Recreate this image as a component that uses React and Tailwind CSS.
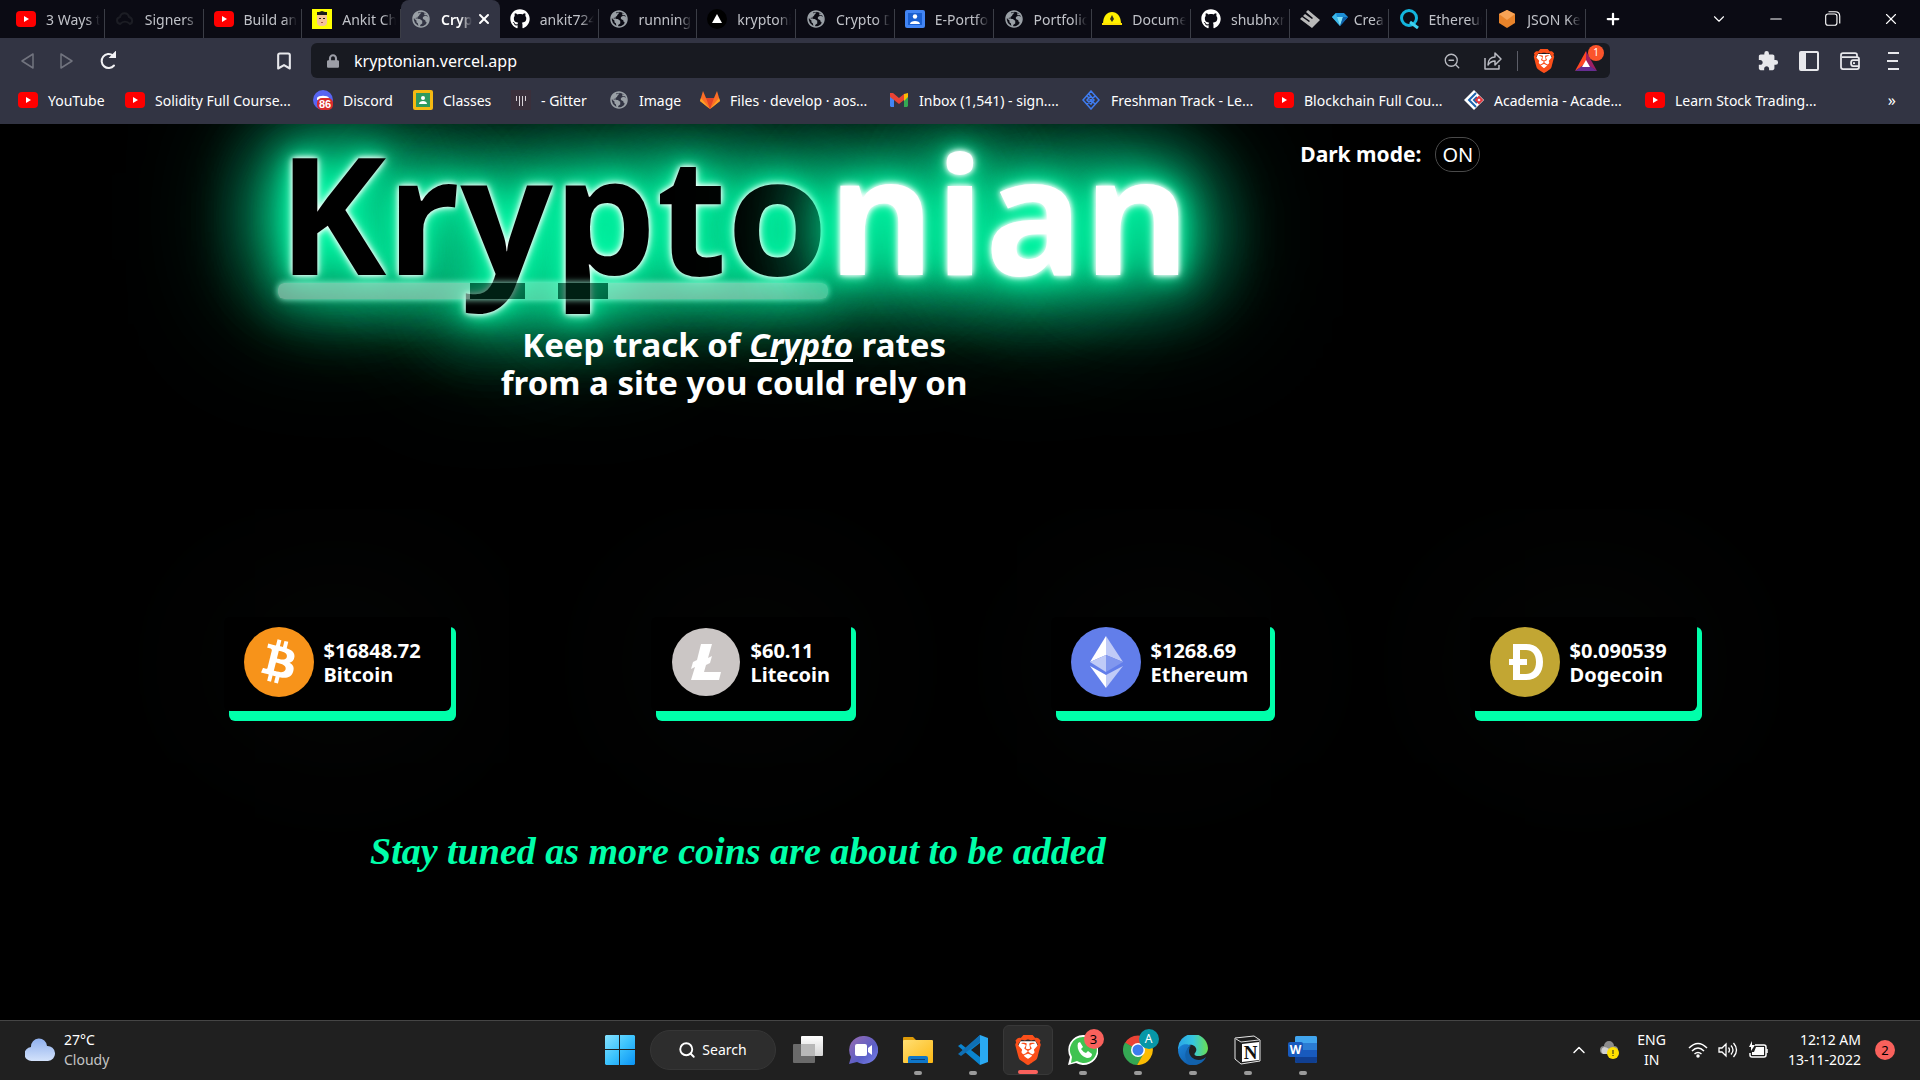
import React from "react";
import { SiBrave } from "react-icons/si";
import { FaGithub, FaLock } from "react-icons/fa";
import { MdExtension } from "react-icons/md";
import { IoEarthSharp } from "react-icons/io5";
import { Search, ZoomOut, Bookmark, Plus, X, ChevronDown, ChevronUp, Minus } from "lucide-react";

const YouTube = () => (
  <svg viewBox="0 0 20 20" className="size-5 shrink-0">
    <rect y="2" width="20" height="16" rx="4" fill="#f00" />
    <path d="M8 7l5 3-5 3z" fill="#fff" />
  </svg>
);
const Globe = () => <IoEarthSharp className="size-5 shrink-0 text-[#9aa0a6]" />;
const GitHub = () => <FaGithub className="size-5 shrink-0 text-white" />;

const Signers = () => (
  <svg viewBox="0 0 20 20" className="size-5 shrink-0" fill="none" stroke="#1c1d24" strokeWidth="2">
    <path d="M5 15c-4-1-4-6 0-7 1-5 8-5 9 0 4 1 4 6 1 7-3-3-7-3-10 0z" />
  </svg>
);
const Avatar = () => (
  <svg viewBox="0 0 20 20" className="size-5 shrink-0">
    <path d="M0 0h20v20H0z" fill="#ff0" />
    <rect x="5" y="4" width="10" height="13" rx="4" fill="#f5c49a" />
    <path d="M5 6V3h2l3-1 3 1h2v3z" fill="#1a1a1a" />
    <path d="M7 9h2v1H7zm4 0h2v1h-2z" fill="#222" />
    <path d="M9 13h2v1H9z" fill="#a65a3c" />
  </svg>
);
const Vercel = () => (
  <svg viewBox="0 0 20 20" className="size-5 shrink-0">
    <circle cx="10" cy="10" r="10" fill="#000" />
    <path d="M10 5l5 9H5z" fill="#fff" />
  </svg>
);
const Contact = () => (
  <svg viewBox="0 0 20 20" className="size-5 shrink-0">
    <rect y="1" width="20" height="18" rx="2" fill="#4285f4" />
    <path d="M3 4h14v12H3z" fill="#1a5fd0" />
    <circle cx="10" cy="7.500" r="2.200" fill="#fff" />
    <path d="M5 15c0-4 10-4 10 0z" fill="#fff" />
  </svg>
);
const Hardhat = () => (
  <svg viewBox="0 0 20 20" className="size-5 shrink-0">
    <path d="M1 15C1 7 5 3 10 3s9 4 9 12z" fill="#fff100" />
    <path d="M0 14h20v2H0z" fill="#ffe000" />
    <path d="M10 6l2 4-2 3-2-3z" fill="#35331c" />
  </svg>
);
const Sketch = () => (
  <svg viewBox="0 0 20 20" className="size-5 shrink-0" fill="#b9b9b9">
    <path d="M8 1l12 10-8 8L0 10l2-2 7 5 1-1-7-5 2-2 7 5 1-1-7-6z" />
  </svg>
);
const Gem = () => (
  <svg viewBox="0 0 16 16" className="size-4 shrink-0">
    <path d="M4 2h8l4 4-8 9-8-9z" fill="#1c8fd6" />
    <path d="M4 2l1 4 3 9-8-9z" fill="#3bb8e8" />
    <path d="M5 6h6l-3 9z" fill="#7fe0f5" />
    <path d="M11 6h5l-8 9z" fill="#0e5fa8" />
  </svg>
);
const QuickNode = () => (
  <svg viewBox="0 0 20 20" className="size-5 shrink-0" fill="none" strokeWidth="3">
    <circle cx="10" cy="9" r="7.500" stroke="#13b5dd" />
    <path d="M11 13l8 6" stroke="#3fd0ee" />
  </svg>
);
const Hex = () => (
  <svg viewBox="0 0 20 20" className="size-5 shrink-0">
    <path d="M10 1l8 4v9l-8 5-8-5V5z" fill="#e8832a" />
    <path d="M10 1l8 4-8 6-8-6z" fill="#f7a356" />
  </svg>
);
const Discord = () => (
  <svg viewBox="0 0 20 20" className="size-5 shrink-0">
    <circle cx="10" cy="10" r="10" fill="#5865f2" />
    <path d="M4 8c1-3 11-3 12 0v2H4z" fill="#fff" />
    <rect x="4" y="8" width="16" height="12" rx="5" fill="#d92b2b" />
    <text x="12" y="18" textAnchor="middle" fontSize="11" fontWeight="700" fontFamily="Liberation Sans, sans-serif" fill="#fff">86</text>
  </svg>
);
const Classroom = () => (
  <svg viewBox="0 0 20 20" className="size-5 shrink-0">
    <rect width="20" height="20" rx="2" fill="#f4b912" />
    <path d="M3 3h14v14H3z" fill="#2f9a5e" />
    <circle cx="10" cy="8" r="2" fill="#fff" />
    <path d="M6 14c0-4 8-4 8 0z" fill="#fff" />
  </svg>
);
const Gitter = () => (
  <svg viewBox="0 0 20 20" className="size-5 shrink-0">
    <path d="M0 0h20v20H0z" fill="#3a2f3b" />
    <path d="M5 6h1v5H5zm3 0h1v10H8zm3 0h1v10h-1zm3 0h1v5h-1z" fill="#d8d2d8" />
  </svg>
);
const GitLab = () => (
  <svg viewBox="0 0 20 20" className="size-5 shrink-0">
    <path d="M0 11l3-10 3 7h8l3-7 3 10-10 8z" fill="#fc6d26" />
    <path d="M10 19L6 8h8z" fill="#e24329" />
    <path d="M10 19L0 11l1-3z" fill="#fca326" />
    <path d="M10 19l10-8-1-3z" fill="#fca326" />
  </svg>
);
const Gmail = () => (
  <svg viewBox="0 0 20 20" className="size-5 shrink-0">
    <path d="M1 5l4 3v9H2l-1-1z" fill="#4285f4" />
    <path d="M19 5l-4 3v9h3l1-1z" fill="#34a853" />
    <path d="M15 4l4-1v4l-4 4z" fill="#fbbc04" />
    <path d="M1 3h3l6 5 5-4v6l-5 4-5-4-4-3z" fill="#ea4335" />
  </svg>
);
const Freshman = () => (
  <svg viewBox="0 0 20 20" className="size-5 shrink-0" fill="none" stroke="#3f7cf0" strokeWidth="1.500">
    <path d="M10 1l8 9-8 9-8-9zM6 6l8 8M14 6l-8 8M8 4l5 6-3 4-4-4 4-4" />
  </svg>
);
const Academia = () => (
  <svg viewBox="0 0 20 20" className="size-5 shrink-0">
    <path d="M10 0l10 10-10 10L0 10z" fill="#fff" />
    <path d="M12 3l-7 7 7 7M13 7l-3 3 3 3" fill="none" stroke="#1d63ad" strokeWidth="2" />
    <path d="M15 7l3 3-3 3-3-3z" fill="none" stroke="#e0343c" strokeWidth="2" />
  </svg>
);
const Brave = ({ className }) => (
  <svg viewBox="0 0 24 24" className={className}>
    <path d="M6 5h12l2 4-3 8-5 5-5-5-3-8z" fill="#fff" />
    <SiBrave x="0" y="0" size={24} color="#fb4f1a" />
  </svg>
);

const tabs = [
  [YouTube, "3 Ways to"], [Signers, "Signers"], [YouTube, "Build an N"], [Avatar, "Ankit Cha"],
  [Globe, "Crypto", true], [GitHub, "ankit7245"], [Globe, "running"], [Vercel, "kryptonian"],
  [Globe, "Crypto Da"], [Contact, "E-Portfolio"], [Globe, "Portfolio"], [Hardhat, "Document"],
  [GitHub, "shubhxmi"], [Sketch, "Create", false, Gem], [QuickNode, "Ethereum"], [Hex, "JSON Key"],
];

const bookmarks = [
  [YouTube, "YouTube", "w-[57px]"], [YouTube, "Solidity Full Course...", "w-[138px]"],
  [Discord, "Discord", "w-[50px]"], [Classroom, "Classes", "w-[48px]"],
  [Gitter, "- Gitter", "w-[48px]"], [Globe, "Image", "w-[41px]"],
  [GitLab, "Files · develop · aos...", "w-[139px]"], [Gmail, "Inbox (1,541) - sign....", "w-[142px]"],
  [Freshman, "Freshman Track - Le...", "w-[143px]"], [YouTube, "Blockchain Full Cou...", "w-[140px]"],
  [Academia, "Academia - Acade...", "w-[131px]"], [YouTube, "Learn Stock Trading...", "w-[142px]"],
];

function TabStrip() {
  return (
    <div className="flex h-[38px] items-end bg-[#0b0b14] pl-1.5">
      <div role="tablist" className="grid h-full min-w-0 flex-1 auto-cols-[minmax(0,1fr)] grid-flow-col">
        {tabs.map(([Icon, label, active, Extra], i) => (
          <button
            key={i}
            role="tab"
            aria-selected={!!active}
            className={
              active
                ? "flex items-center rounded-t-lg bg-[#323443] pl-2.5 pr-2 text-white"
                : "flex items-center pl-2.5 text-[#c0c2c8]"
            }
          >
            <Icon />
            {Extra && <span className="-mr-1 ml-3"><Extra /></span>}
            <span
              className={
                active
                  ? "ml-2.5 min-w-0 flex-1 overflow-hidden whitespace-nowrap text-left font-semibold [mask-image:linear-gradient(to_right,#000_60%,transparent)]"
                  : "ml-2.5 min-w-0 flex-1 overflow-hidden whitespace-nowrap text-left [mask-image:linear-gradient(to_right,#000_75%,transparent)]"
              }
            >
              {label}
            </span>
            {active ? <X className="ml-1 size-4 shrink-0" strokeWidth={3} /> : <span className="ml-1 h-[29px] w-px self-end bg-[#3b3d46]" />}
          </button>
        ))}
      </div>
      <div className="flex h-full w-[334px] items-center text-white">
        <button aria-label="New tab" className="ml-[18px]"><Plus className="size-[18px]" strokeWidth={3} /></button>
        <button aria-label="Search tabs" className="ml-[88px]"><ChevronDown className="size-[18px]" strokeWidth={1.5} /></button>
        <button aria-label="Minimise" className="ml-[39px]"><Minus className="size-[18px]" strokeWidth={1.5} /></button>
        <button aria-label="Restore" className="ml-[39px]">
          <svg viewBox="0 0 16 16" className="size-[18px]" fill="none" stroke="#fff">
            <rect x="1.500" y="3.500" width="10" height="10" rx="2" />
            <path d="M4 1.500h6q4 0 4 4V12" />
          </svg>
        </button>
        <button aria-label="Close" className="ml-10"><X className="size-[18px]" strokeWidth={1.5} /></button>
      </div>
    </div>
  );
}

function Toolbar() {
  return (
    <div className="flex items-center pt-[5px] text-[#e8e8ec]">
      <button aria-label="Back" className="ml-[19px]">
        <svg viewBox="0 0 16 18" className="h-[18px] w-4" fill="none" stroke="#72747f" strokeWidth="1.500"><path d="M14 2v14L3 9z" strokeLinejoin="round" /></svg>
      </button>
      <button aria-label="Forward" className="ml-6">
        <svg viewBox="0 0 16 18" className="h-[18px] w-4" fill="none" stroke="#72747f" strokeWidth="1.500"><path d="M2 2v14l11-7z" strokeLinejoin="round" /></svg>
      </button>
      <button aria-label="Reload" className="ml-6">
        <svg viewBox="0 0 20 20" className="size-5" fill="none" stroke="#f2f2f5" strokeWidth="2">
          <path d="M15 14.500A7 7 0 1 1 14 4.500" strokeLinecap="round" />
          <path d="M12 6h4V2z" fill="#f2f2f5" />
        </svg>
      </button>
      <button aria-label="Bookmark" className="ml-[155px]"><Bookmark className="size-5" strokeWidth={2.5} /></button>
      <div className="ml-[17px] flex h-[35px] min-w-0 flex-1 items-center rounded-md bg-[#181a21] pl-4 pr-2">
        <FaLock className="h-4 w-3 shrink-0 text-[#9c9ea7]" />
        <input aria-label="Address" defaultValue="kryptonian.vercel.app" className="ml-[15px] min-w-0 flex-1 bg-transparent text-[16px] text-white outline-none" />
        <button aria-label="Zoom"><ZoomOut className="size-[18px] text-[#b9bbc2]" strokeWidth={1.75} /></button>
        <button aria-label="Share" className="ml-[22px]">
          <svg viewBox="0 0 20 20" className="size-5" fill="none" stroke="#b9bbc2" strokeWidth="1.500">
            <path d="M2 7v11h14v-4M5 14c0-5 3-8 7-8V2l6 6-6 6v-4c-3 0-5 1-7 4z" strokeLinejoin="round" />
          </svg>
        </button>
        <span className="mx-3.5 h-5 w-px bg-[#5c5e68]" />
        <button aria-label="Brave Shields"><Brave className="size-6" /></button>
        <button aria-label="Rewards" className="relative ml-[18px] pr-1">
          <svg viewBox="0 0 24 24" className="size-6">
            <path d="M12 2L1 22l11-7z" fill="#ff4724" />
            <path d="M12 2l11 20-11-7z" fill="#9e1f63" />
            <path d="M1 22h22l-11-8z" fill="#662d91" />
            <path d="M12 11l4 7H8z" fill="#fff" />
          </svg>
          <span className="absolute -right-0.5 -top-1 flex size-4 items-center justify-center rounded-full bg-[#fb542b] text-[10px] text-white">1</span>
        </button>
      </div>
      <div className="flex w-[310px] items-center justify-end gap-5 pr-5">
        <button aria-label="Extensions"><MdExtension className="size-[22px]" /></button>
        <button aria-label="Sidebar">
          <svg viewBox="0 0 20 20" className="size-5"><rect x="1" y="1" width="18" height="18" rx="1" fill="none" stroke="#e8e8ec" strokeWidth="2" /><path d="M1 1h6v18H1z" fill="#e8e8ec" /></svg>
        </button>
        <button aria-label="Wallet" className="ml-px">
          <svg viewBox="0 0 20 20" className="size-5" fill="none" stroke="#e8e8ec" strokeWidth="1.750">
            <path d="M17 6V4q0-2-2-2H3Q1 2 1 4v12q0 2 2 2h14q2 0 2-2V8q0-2-2-2H2" />
            <path d="M19 9h-6q-2 0-2 3t2 3h6M13 12h2" />
          </svg>
        </button>
        <button aria-label="Menu" className="ml-1.5">
          <svg viewBox="0 0 14 20" className="h-5 w-3.5" fill="none" stroke="#e8e8ec" strokeWidth="2"><path d="M2 2h11M1 10h11M2 18h11" /></svg>
        </button>
      </div>
    </div>
  );
}

function Bookmarks() {
  return (
    <div className="flex h-[46px] items-center gap-5 pb-0.5 pl-[18px] pr-6 text-white">
      {bookmarks.map(([Icon, label, width], i) => (
        <a key={i} href="#" className="flex shrink-0 items-center gap-2.5">
          <Icon />
          <span className={`whitespace-nowrap ${width}`}>{label}</span>
        </a>
      ))}
      <button aria-label="More bookmarks" className="ml-auto text-base">»</button>
    </div>
  );
}

const Bitcoin = () => (
  <svg viewBox="0 0 64 64" className="size-[70px] shrink-0">
    <circle cx="32" cy="32" r="32" fill="#f7931a" />
    <path fill="#fff" d="M46.100 27.440c.640-4.260-2.600-6.550-7.040-8.080l1.440-5.770-3.510-.880-1.400 5.620c-.920-.230-1.870-.450-2.810-.660l1.410-5.660-3.510-.870-1.440 5.770c-.760-.170-1.510-.350-2.240-.530v-.020l-4.840-1.210-.930 3.750s2.600.600 2.550.630c1.420.360 1.680 1.300 1.640 2.050l-1.640 6.580c.1.020.230.060.370.120l-.380-.090-2.300 9.210c-.170.430-.620 1.080-1.610.830.040.050-2.550-.640-2.550-.640l-1.740 4.020 4.570 1.140c.850.210 1.680.440 2.500.650l-1.450 5.840 3.500.870 1.440-5.770c.960.260 1.890.5 2.800.730l-1.430 5.750 3.510.870 1.450-5.820c5.990 1.130 10.490.680 12.380-4.740 1.530-4.360-.080-6.880-3.220-8.510 2.290-.530 4.020-2.040 4.480-5.150zM38.080 38.690c-1.090 4.360-8.430 2-10.810 1.410l1.930-7.740c2.380.6 10.010 1.770 8.880 6.330zm1.090-11.310c-.990 3.970-7.100 1.950-9.080 1.460l1.750-7.020c1.980.490 8.360 1.410 7.330 5.560z" />
  </svg>
);
const Litecoin = () => (
  <svg viewBox="0 0 70 70" className="size-[70px] shrink-0">
    <circle cx="35" cy="35" r="34" fill="#cbc6c5" />
    <path d="M30 17h11l-4 14 4-2-2 7-4 2-2 7h17l-2 8H20l4-13-4 2 2-7 4-2z" fill="#fff" />
  </svg>
);
const Ethereum = () => (
  <svg viewBox="0 0 70 70" className="size-[70px] shrink-0">
    <circle cx="35" cy="35" r="35" fill="#627eea" />
    <path d="M35 9v19L19 35z" fill="#fff" />
    <path d="M35 9v19l17 7z" fill="#c0cbf7" />
    <path d="M19 35l16-7v17z" fill="#c0cbf7" />
    <path d="M52 35l-17-7v17z" fill="#8197ee" />
    <path d="M19 39l16 9v13z" fill="#fff" />
    <path d="M52 39l-17 9v13z" fill="#c0cbf7" />
  </svg>
);
const Dogecoin = () => (
  <svg viewBox="0 0 70 70" className="size-[70px] shrink-0">
    <circle cx="35" cy="35" r="35" fill="#c2a633" />
    <path fillRule="evenodd" d="M23 17h13c11 0 17 7 17 18s-6 18-17 18H23V38h-4v-6h4zm7 6v9h7v6h-7v9h6c6 0 10-4 10-12s-4-12-10-12z" fill="#fff" />
  </svg>
);

const coins = [
  [Bitcoin, "$16848.72", "Bitcoin", "w-[107px]"],
  [Litecoin, "$60.11", "Litecoin", "w-20"],
  [Ethereum, "$1268.69", "Ethereum", "w-[99px]"],
  [Dogecoin, "$0.090539", "Dogecoin", "w-[107px]"],
];

const neon =
  "[text-shadow:0_0_5px_#fff,0_0_10px_#fff,0_0_21px_#0fa,0_0_42px_#0fa,0_0_82px_#0fa,0_0_92px_#0fa,0_0_102px_#0fa,0_0_151px_#0fa]";

function Page() {
  return (
    <main className="flex-1 overflow-hidden bg-black font-['Noto_Sans','Open_Sans',sans-serif] text-white">
      <div className="flex items-start pl-[278px]">
        <div className="text-center">
          <h1 className={`isolate flex font-['Open_Sans','Noto_Sans',sans-serif] text-[163px] font-bold leading-[176px] ${neon}`}>
            <span className="relative text-black">
              <span className="absolute inset-x-0 top-[159px] -z-10 h-4 rounded-md shadow-[0_0_42px_#00ffaa80,0_0_82px_#00ffaa80]" />
              Krypto
              <span className="absolute inset-x-0 top-[159px] flex h-4 overflow-hidden rounded-md shadow-[0_0_7px_#9fffdf]">
                <span className="w-[35%] bg-[#b4f0d8]/60" />
                <span className="w-[10%] bg-[#003522]/60" />
                <span className="w-[6%] bg-[#96ffd8]/50" />
                <span className="w-[9%] bg-[#003522]/60" />
                <span className="flex-1 bg-[#b4f0d8]/60" />
              </span>
            </span>
            <span className="relative">nian</span>
          </h1>
          <p className="relative mt-[26px] text-[33px] font-bold leading-[38px]">
            Keep track of <em className="underline">Crypto</em> rates
            <br />
            from a site you could rely on
          </p>
        </div>
        <div className="relative ml-[110px] mt-[13px] flex items-center gap-3.5 text-xl">
          <span id="mode" className="text-[21px] font-bold">Dark mode:</span>
          <button aria-labelledby="mode" className="h-[35px] rounded-[17px] border border-[#4a4a4a] bg-black px-1.5">ON</button>
        </div>
      </div>

      <ul className="mt-[215px] flex justify-center gap-[200px]">
        {coins.map(([Icon, price, name, width]) => (
          <li key={name} className="flex items-start gap-2.5 rounded-md bg-black px-5 pb-3.5 pt-2.5 shadow-[5px_10px_#0fa,0_0_200px_rgba(120,160,145,0.09)]">
            <Icon />
            <div className={`mt-3 whitespace-nowrap text-xl font-bold leading-6 ${width}`}>
              <p>{price}</p>
              <p>{name}</p>
            </div>
          </li>
        ))}
      </ul>

      <p className="ml-[370px] mt-[110px] font-['Brush_Script_MT','Liberation_Serif',serif] text-[38px] font-bold italic leading-[60px] text-[#0fa]">
        Stay tuned as more coins are about to be added
      </p>
    </main>
  );
}

const Windows = () => (
  <svg viewBox="0 0 30 30" className="size-[30px]">
    <defs><linearGradient id="win" x1="0" y1="0" x2="1" y2="1"><stop stopColor="#86e2ff" /><stop offset=".5" stopColor="#3cc3fd" /><stop offset="1" stopColor="#0a93f5" /></linearGradient></defs>
    <path d="M1 0h13v14H0V1zM15 0h14l1 1v13H15zM0 15h14v15H1l-1-1zM15 15h15v14l-1 1H15z" fill="url(#win)" />
  </svg>
);
const TaskView = () => (
  <svg viewBox="0 0 30 30" className="size-[30px]">
    <defs><linearGradient id="tv" x1="0" y1="0" x2="0" y2="1"><stop stopColor="#fff" /><stop offset="1" stopColor="#d4d4d4" /></linearGradient></defs>
    <rect x="8" y="1" width="22" height="20" rx="1" fill="url(#tv)" />
    <rect y="9" width="22" height="19" rx="1" fill="#6a6a6a" />
    <path d="M8 9h14v12H8z" fill="#b8b8b8" />
  </svg>
);
const Chat = () => (
  <svg viewBox="0 0 30 30" className="size-[30px]">
    <defs><linearGradient id="chat" x1="0" y1="0" x2="1" y2="1"><stop stopColor="#9a6bb0" /><stop offset=".6" stopColor="#5b5fc7" /><stop offset="1" stopColor="#7b83eb" /></linearGradient></defs>
    <path d="M15 1a14 14 0 1 1-6 26l-8 2 2-7A14 14 0 0 1 15 1z" fill="url(#chat)" />
    <rect x="7" y="9" width="12" height="12" rx="2" fill="#fff" />
    <path d="M20 13l4-3v10l-4-3z" fill="#fff" />
  </svg>
);
const Explorer = () => (
  <svg viewBox="0 0 30 30" className="size-[30px]">
    <defs><linearGradient id="fold" x1="0" y1="0" x2="1" y2="1"><stop stopColor="#ffdf73" /><stop offset="1" stopColor="#fdb813" /></linearGradient></defs>
    <path d="M0 3q0-1 1-1h9l3 3h16v8H0z" fill="#dd9a08" />
    <rect y="5" width="30" height="23" rx="1" fill="url(#fold)" />
    <path d="M5 28v-5q0-2 2-2h16q2 0 2 2v5z" fill="#0f76c8" />
    <path d="M8 24h14v1H8z" fill="#0a3f75" />
  </svg>
);
const VSCode = () => (
  <svg viewBox="0 0 30 30" className="size-[30px]">
    <path d="M22 0L8 13 3 9 0 11l22 19v-8L13 15l9-7z" fill="#0a84cf" />
    <path d="M0 19l3 2L22 7V0z" fill="#0f6fb4" />
    <path d="M22 0l8 3v24l-8 3z" fill="#2aaaf3" />
  </svg>
);
const WhatsApp = () => (
  <span className="relative flex size-[30px] items-center justify-center">
    <svg viewBox="0 0 30 30" className="size-[30px]">
      <path d="M15 0a15 15 0 1 1-7 28l-8 2 2-8A15 15 0 0 1 15 0z" fill="#fff" />
      <path d="M15 2a13 13 0 1 1-6 24l-6 2 1-6A13 13 0 0 1 15 2z" fill="#3fc351" />
      <path d="M10 8l2-1 3 5-2 2q2 3 5 4l2-2 4 3q0 4-5 4C14 22 8 15 10 8z" fill="#fff" />
    </svg>
    <span className="absolute -right-1.5 -top-1.5 flex size-5 items-center justify-center rounded-full bg-[#f9615c] text-[13px] text-black">3</span>
  </span>
);
const Chrome = () => (
  <span className="relative flex size-[30px]">
    <svg viewBox="0 0 30 30" className="size-[30px]">
      <path d="M15 15L2 8a15 15 0 0 1 26 0z" fill="#ea4335" />
      <path d="M2 7.500A15 15 0 0 0 14 30l7-11-6-4z" fill="#34a853" />
      <path d="M28 8a15 15 0 0 1-14 22l7-12V8z" fill="#fbbc04" />
      <circle cx="15" cy="15" r="7" fill="#fff" />
      <circle cx="15" cy="15" r="5.500" fill="#3b7ded" />
    </svg>
    <span className="absolute -right-1.5 -top-1.5 flex size-5 items-center justify-center rounded-full bg-[#0797a7] text-[12px] text-white">A</span>
  </span>
);
const Edge = () => (
  <svg viewBox="0 0 30 30" className="size-[30px]">
    <defs>
      <linearGradient id="edge1" x1="0" y1="0" x2="1" y2="0"><stop stopColor="#2aa5e8" /><stop offset=".5" stopColor="#35c6df" /><stop offset="1" stopColor="#6be04f" /></linearGradient>
      <linearGradient id="edge2" x1="0" y1="0" x2="1" y2="1"><stop stopColor="#1b84d8" /><stop offset="1" stopColor="#0b4f9c" /></linearGradient>
    </defs>
    <path d="M0 15A15 15 0 0 1 30 13c0 6-5 8-9 8-5 0-5-2-4-3 4-5-2-9-6-8C6 10 2 12 0 15z" fill="url(#edge1)" />
    <path d="M0 15c2-6 9-7 13-4-4 1-5 6-3 10 3 7 11 7 17 2-5 8-16 10-22 3a15 15 0 0 1-5-11z" fill="url(#edge2)" />
    <path d="M12 12c-3 6 1 13 9 13 3 0 5-1 7-3-3 7-11 10-17 6C5 23 7 14 12 12z" fill="#1262ac" />
  </svg>
);
const Notion = () => (
  <svg viewBox="0 0 30 30" className="size-[30px]">
    <path d="M2 3l19-2 6 4v21l-19 3-6-5z" fill="#1b1b1b" stroke="#e6e6e6" />
    <path d="M9 9l17-2v18L9 27z" fill="#fff" />
    <path d="M8 7L3 4M8 7l18-2" stroke="#ddd" />
    <text x="17.500" y="24" textAnchor="middle" fontSize="19" fontWeight="700" fontFamily="Liberation Serif, serif" fill="#111">N</text>
  </svg>
);
const Word = () => (
  <svg viewBox="0 0 30 30" className="size-[30px]">
    <rect x="7" y="1" width="22" height="27" rx="2" fill="#2b7cd3" />
    <path d="M7 3q0-2 2-2h18q2 0 2 2v5H7z" fill="#41a5ee" />
    <path d="M7 15h22v7H7z" fill="#185abd" />
    <path d="M7 22h22v4q0 2-2 2H9q-2 0-2-2z" fill="#103f91" />
    <rect y="7" width="15" height="15" rx="2" fill="#185abd" />
    <text x="7.500" y="19" textAnchor="middle" fontSize="12" fontWeight="700" fontFamily="Open Sans, sans-serif" fill="#fff">W</text>
  </svg>
);

const apps = [
  ["Task view", TaskView, ""], ["Chat", Chat, ""], ["File Explorer", Explorer, "open"], ["VS Code", VSCode, "open"],
  ["Brave", () => <Brave className="size-[30px]" />, "active"], ["WhatsApp", WhatsApp, "open"], ["Chrome", Chrome, "open"],
  ["Edge", Edge, "open"], ["Notion", Notion, "open"], ["Word", Word, "open"],
];

function Taskbar() {
  return (
    <footer className="grid h-[60px] grid-cols-[1fr_auto_1fr] items-center border-t border-[#454545] bg-[#202020] pb-0.5 text-[14px] leading-5 text-white">
      <div className="flex items-center gap-[9px] pl-[25px]">
        <svg viewBox="0 0 30 24" className="h-6 w-[30px]">
          <defs><linearGradient id="cloud" x1="0" y1="0" x2="0" y2="1"><stop stopColor="#8fb0ee" /><stop offset="1" stopColor="#d3e2fb" /></linearGradient></defs>
          <path d="M7 23a7 7 0 0 1-1-14 8 8 0 0 1 16-1 7.500 7.500 0 0 1 1 15z" fill="url(#cloud)" />
        </svg>
        <div>
          <p>27°C</p>
          <p className="text-[#c4c4c4]">Cloudy</p>
        </div>
      </div>
      <div className="flex items-center gap-[5px] pl-0.5">
        <button aria-label="Start" className="flex size-[50px] items-center justify-center"><Windows /></button>
        <button className="mr-0.5 flex h-10 w-[126px] items-center justify-center gap-1.5 rounded-full border border-[#363636] bg-[#2d2d2d]">
          <Search className="size-[18px]" strokeWidth={2.5} />
          Search
        </button>
        {apps.map(([name, Icon, state]) => (
          <button
            key={name}
            aria-label={name}
            className={
              state === "active"
                ? "relative flex size-[50px] items-center justify-center rounded-md border border-[#383838] bg-[#2d2d2d]"
                : "relative flex size-[50px] items-center justify-center"
            }
          >
            <Icon />
            {state === "open" && <span className="absolute bottom-0 h-1 w-2 rounded-full bg-[#9a9a9a]" />}
            {state === "active" && <span className="absolute bottom-0 h-1 w-5 rounded-full bg-[#f9615c]" />}
          </button>
        ))}
      </div>
      <div className="flex items-center justify-end pr-[25px]">
        <ChevronUp className="size-5" strokeWidth={1.75} />
        <svg viewBox="0 0 20 18" className="ml-2.5 h-[18px] w-5">
          <path d="M5 13a4 4 0 0 1 0-8 5 5 0 0 1 10 0 4 4 0 0 1 0 8z" fill="#8b8b8b" />
          <path d="M4 13a4 4 0 0 1 1-7q5 0 9 7z" fill="#d0d0d0" />
          <circle cx="14" cy="12" r="6" fill="#ffe000" />
          <path d="M13.500 9h1v4h-1zm0 5h1v1h-1z" fill="#222" />
        </svg>
        <p className="ml-[18px] text-center">ENG<br />IN</p>
        <svg viewBox="0 0 20 16" className="ml-[22px] h-4 w-5" fill="none" stroke="#fff" strokeWidth="1.500">
          <path d="M1 6q9-9 18 0M4 9q6-6 12 0M6.500 12q3.500-3 7 0" />
          <circle cx="10" cy="14" r="1" fill="#fff" />
        </svg>
        <svg viewBox="0 0 20 18" className="ml-2.5 h-[18px] w-5" fill="none" stroke="#fff" strokeWidth="1.300">
          <path d="M1 7h3l4-4v12l-4-4H1zM10.500 6.500q2 2.500 0 5M13 4.500q4 4.500 0 9M15.500 2q6 7 0 14" />
        </svg>
        <svg viewBox="0 0 20 18" className="ml-2.5 h-[18px] w-5" fill="none" stroke="#fff" strokeWidth="1.500">
          <path d="M7 4h9q2 0 2 2v8q0 2-2 2H4q-2 0-2-2v-2" />
          <path d="M19 8v4" />
          <path d="M8 6h8v8H4v-3h2z" fill="#fff" stroke="none" />
          <path d="M4 0L1 6h2v4l4-6H4z" fill="#fff" stroke="none" />
        </svg>
        <p className="ml-5 text-right">12:12 AM<br />13-11-2022</p>
        <span className="ml-3.5 flex size-5 items-center justify-center rounded-full bg-[#f9615c] text-[13px] text-black">2</span>
      </div>
    </footer>
  );
}

export default function App() {
  return (
    <div className="flex min-h-screen flex-col bg-black font-['Noto_Sans','Open_Sans',sans-serif]">
      <header className="relative z-10 bg-[#323443] text-[14px]">
        <TabStrip />
        <Toolbar />
        <Bookmarks />
      </header>
      <Page />
      <Taskbar />
    </div>
  );
}
